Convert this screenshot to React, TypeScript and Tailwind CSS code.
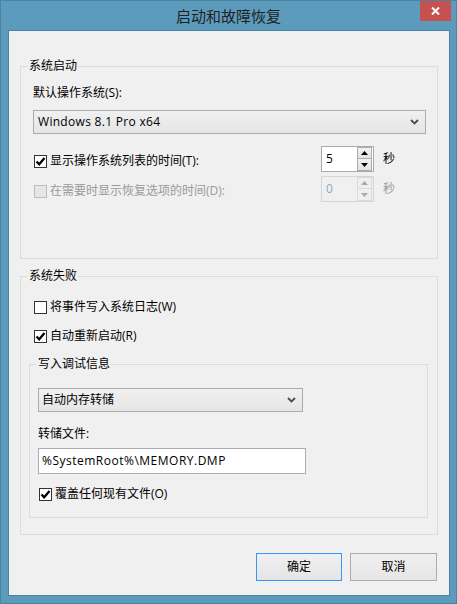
import React from "react";

const FONT = { fontFamily: '"Open Sans", "Noto Sans CJK SC", sans-serif' };

function Group({ label, className, children }: { label: string; className?: string; children: React.ReactNode }) {
  return (
    <div className={`relative border border-[#dcdcdc] ${className ?? ""}`}>
      <span className="absolute left-[7px] top-[-9px] bg-[#f0f0f0] px-px text-[12px] leading-4 text-black">
        {label}
      </span>
      {children}
    </div>
  );
}

function CheckBox({ checked, disabled }: { checked?: boolean; disabled?: boolean }) {
  return (
    <div
      className={`flex h-[13px] w-[13px] shrink-0 items-center justify-center border ${
        disabled ? "border-[#bcbcbc] bg-[#e6e6e6]" : "border-[#333333] bg-white"
      }`}
    >
      {checked && (
        <svg width="11" height="11" viewBox="0 0 11 11">
          <path d="M1.5 5.5 L4.2 8.3 L9.5 2" fill="none" stroke="#000" strokeWidth="2.2" />
        </svg>
      )}
    </div>
  );
}

function CheckRow({ checked, disabled, label, className }: { checked?: boolean; disabled?: boolean; label: string; className?: string }) {
  return (
    <div className={`flex h-4 items-center ${className ?? ""}`}>
      <CheckBox checked={checked} disabled={disabled} />
      <span className={`ml-[3px] text-[12px] leading-4 ${disabled ? "text-[#9a9a9a]" : "text-black"}`}>{label}</span>
    </div>
  );
}

function Chevron() {
  return (
    <svg width="9" height="6" viewBox="0 0 9 6">
      <path d="M1 1 L4.5 4.5 L8 1" fill="none" stroke="#4a4a4a" strokeWidth="1.8" />
    </svg>
  );
}

function Select({ value, className, textClass }: { value: string; className?: string; textClass?: string }) {
  return (
    <div
      className={`flex h-[24px] items-center justify-between border border-[#acacac] bg-gradient-to-b from-[#f0f0f0] to-[#e5e5e5] pl-[3px] pr-[6px] ${className ?? ""}`}
    >
      <span className={`text-[12px] leading-4 text-black ${textClass ?? ""}`}>{value}</span>
      <Chevron />
    </div>
  );
}

function Tri({ up, color }: { up?: boolean; color: string }) {
  return (
    <svg width="7" height="4" viewBox="0 0 7 4">
      {up ? <path d="M0 4 L3.5 0 L7 4 Z" fill={color} /> : <path d="M0 0 L3.5 4 L7 0 Z" fill={color} />}
    </svg>
  );
}

function Spin({ value, disabled }: { value: string; disabled?: boolean }) {
  const btn = disabled
    ? "border-[#dadada] bg-[#efefef]"
    : "border-[#acacac] bg-gradient-to-b from-[#f2f2f2] to-[#e3e3e3]";
  return (
    <div
      className={`flex h-[26px] w-[53px] shrink-0 border ${
        disabled ? "border-[#d5d5d5] bg-[#f0f0f0]" : "border-[#ababab] bg-white"
      }`}
    >
      <div className={`flex flex-1 items-center pl-[4px] text-[12px] leading-4 ${disabled ? "text-[#8fa8c4]" : "text-black"}`}>
        {value}
      </div>
      <div className="mr-px flex w-[15px] flex-col">
        <div className={`flex h-[12px] items-center justify-center border ${btn}`}>
          <Tri up color={disabled ? "#a8a8a8" : "#000"} />
        </div>
        <div className={`flex h-[12px] items-center justify-center border border-t-0 ${btn}`}>
          <Tri color={disabled ? "#a8a8a8" : "#000"} />
        </div>
      </div>
    </div>
  );
}

function SpinRow({ checked, disabled, label, value, className }: { checked?: boolean; disabled?: boolean; label: string; value: string; className?: string }) {
  return (
    <div className={`flex h-[26px] items-start ${className ?? ""}`}>
      <div className="mt-[7px] w-[288px] pl-px">
        <CheckRow checked={checked} disabled={disabled} label={label} />
      </div>
      <Spin value={value} disabled={disabled} />
      <span className={`ml-[9px] mt-[5px] text-[12px] leading-4 ${disabled ? "text-[#9a9a9a]" : "text-black"}`}>秒</span>
    </div>
  );
}

function Button({ label, primary, className }: { label: string; primary?: boolean; className?: string }) {
  return (
    <div
      className={`flex h-[28px] items-center justify-center border bg-gradient-to-b from-[#f0f0f0] to-[#e5e5e5] text-[12px] leading-4 text-black ${
        primary ? "border-[#3399ff]" : "border-[#acacac]"
      } ${className ?? ""}`}
    >
      {label}
    </div>
  );
}

export default function App() {
  return (
    <div className="flex h-[604px] w-[457px] flex-col border border-[#4a84a4] bg-[#5c9bbb]" style={FONT}>
      <div className="relative flex h-[29px] shrink-0 items-center justify-center">
        <span className="text-[15px] leading-5 text-[#1f1f1f]">启动和故障恢复</span>
        <div className="absolute right-[5px] top-0 flex h-[20px] w-[31px] items-center justify-center bg-[#c75050]">
          <svg width="9" height="8" viewBox="0 0 9 8">
            <path d="M1 0.5 L8 7.5 M8 0.5 L1 7.5" stroke="#fff" strokeWidth="2" />
          </svg>
        </div>
      </div>
      <div className="mb-[7px] ml-[7px] mr-[6px] flex flex-1 flex-col border border-[#4b84a2] bg-[#f0f0f0]">
        <Group label="系统启动" className="ml-[11px] mt-[35px] w-[418px] pb-[56px] pl-[12px] pr-[11px] pt-[18px]">
          <div className="text-[12px] leading-4 text-black">默认操作系统(S):</div>
          <Select value="Windows 8.1 Pro x64" className="mt-[9px] pl-[4px]" textClass="tracking-[0.3px]" />
          <SpinRow checked label="显示操作系统列表的时间(T):" value="5" className="mt-[12px]" />
          <SpinRow disabled label="在需要时显示恢复选项的时间(D):" value="0" className="mt-[4px]" />
        </Group>
        <Group label="系统失败" className="ml-[11px] mt-[17px] w-[418px] pb-[16px] pl-[8px] pr-[9px] pt-[22px]">
          <CheckRow label="将事件写入系统日志(W)" className="ml-[5px]" />
          <CheckRow checked label="自动重新启动(R)" className="ml-[5px] mt-[13px]" />
          <Group label="写入调试信息" className="mt-[20px] pb-[15px] pl-[8px] pt-[23px]">
            <Select value="自动内存转储" className="w-[265px]" />
            <div className="mt-[14px] text-[12px] leading-4 text-black">转储文件:</div>
            <div className="mt-[6px] flex h-[26px] w-[268px] items-center border border-[#abadb3] bg-white pl-[3px] text-[12px] leading-4 tracking-[0.5px] text-black">
              %SystemRoot%\MEMORY.DMP
            </div>
            <CheckRow checked label="覆盖任何现有文件(O)" className="ml-px mt-[12px]" />
          </Group>
        </Group>
        <div className="mr-[12px] mt-[18px] flex justify-end gap-[8px]">
          <Button label="确定" primary className="w-[86px]" />
          <Button label="取消" className="w-[87px]" />
        </div>
      </div>
    </div>
  );
}
